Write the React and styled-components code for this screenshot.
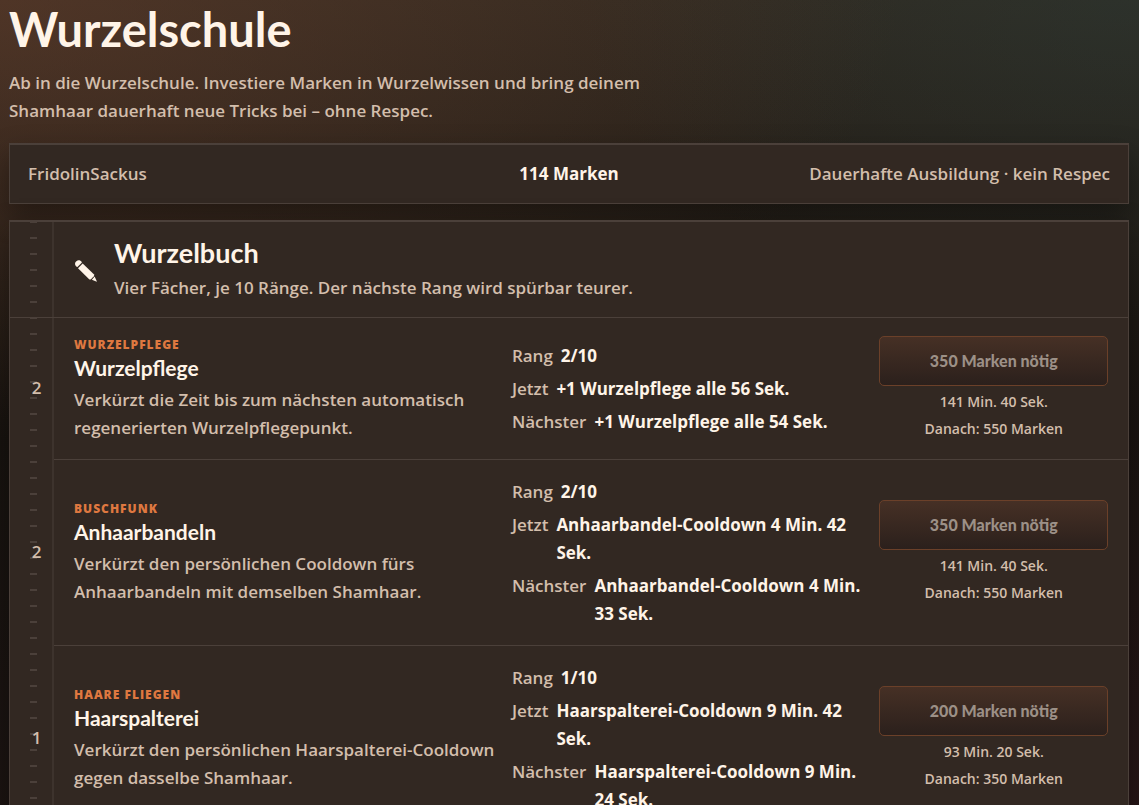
import React from "react";
import styled, { createGlobalStyle } from "styled-components";

const colors = {
  cream: "#fff4e8",
  sand: "#d3beac",
  accent: "#df7840",
  panel: "#322822",
  line: "#4b403a",
};

const GlobalStyle = createGlobalStyle`
  * { box-sizing: border-box; }
  html { background: #1c1412; scrollbar-width: none; }
  body {
    margin: 0;
    color: ${colors.sand};
    font: 600 17px/28px "Open Sans", "Noto Sans", sans-serif;
    background:
      radial-gradient(ellipse 900px 440px at 0 0, rgba(110, 65, 45, 0.5), transparent),
      radial-gradient(ellipse 560px 320px at 100% 0, rgba(40, 62, 60, 0.4), transparent),
      radial-gradient(ellipse 600px 480px at 100% 800px, rgba(62, 26, 32, 0.32), transparent),
      linear-gradient(180deg, #302920 0, #17130f 420px, #1c1412 100%);
  }
  h1, h2, h3, p, dl, dd { margin: 0; }
`;

const Page = styled.main`
  padding: 0 10px 24px 9px;
`;

const Intro = styled.header`
  padding: 0 0 18px;
  max-width: 660px;
`;

const Title = styled.h1`
  padding: 1px 0 12px;
  color: ${colors.cream};
  font: 700 47px/56px Lato, sans-serif;
`;

const StatusBar = styled.section`
  display: grid;
  grid-template-columns: 1fr auto 1fr;
  align-items: center;
  padding: 16px 18px 15px;
  border: 1px solid ${colors.line};
  background: ${colors.panel};
  box-shadow: inset 0 1px 0 ${colors.line}, 0 12px 28px rgba(0, 0, 0, 0.35);

  strong { color: ${colors.cream}; font-weight: 700; }
  span:last-child { text-align: right; }
`;

const Book = styled.section`
  margin-top: 16px;
  border: 1px solid ${colors.line};
  background:
    repeating-linear-gradient(180deg, ${colors.line} 0 2px, transparent 2px 16px) 20px 0 / 7px 100% no-repeat,
    linear-gradient(#3d332d, #3d332d) 42px 0 / 2px 100% no-repeat,
    ${colors.panel};
  box-shadow: inset 0 1px 0 ${colors.line}, 0 12px 28px rgba(0, 0, 0, 0.35);
`;

const BookHeader = styled.header`
  display: flex;
  align-items: center;
  gap: 16px;
  padding: 16px 20px 15px 64px;
  border-bottom: 1px solid ${colors.line};

  svg { flex: none; }
`;

const BookTitle = styled.h2`
  margin-bottom: 5px;
  color: ${colors.cream};
  font: 700 27px/32px Lato, sans-serif;
`;

const Subject = styled.article`
  display: grid;
  grid-template-columns: 44px 1fr;
`;

const RankMark = styled.div`
  display: grid;
  place-items: center;
  padding: 0 0 2px 9px;
`;

const SubjectBody = styled.div`
  display: grid;
  grid-template-columns: 1.2fr 1fr 0.65fr;
  column-gap: 16px;
  align-items: center;
  padding: 18px 20px 17px;
  border-bottom: 1px solid ${colors.line};
`;

const Eyebrow = styled.p`
  color: ${colors.accent};
  font-size: 12px;
  font-weight: 800;
  line-height: 18px;
  letter-spacing: 1px;
  text-transform: uppercase;
`;

const SubjectTitle = styled.h3`
  margin-bottom: 4px;
  color: ${colors.cream};
  font: 700 21px/28px Lato, sans-serif;
`;

const Facts = styled.dl`
  display: grid;
  gap: 5px;
`;

const Fact = styled.div`
  display: flex;
  gap: 8px;

  dd { color: ${colors.cream}; font-weight: 700; }
`;

const Purchase = styled.div`
  font-size: 14px;
  line-height: 27px;
  text-align: center;
`;

const BuyButton = styled.button`
  display: block;
  width: 100%;
  height: 50px;
  margin-bottom: 2px;
  border: 1px solid #6b4029;
  border-radius: 5px;
  background: linear-gradient(180deg, #463025, #2b201c);
  color: #9c9087;
  font: 900 16px/24px Lato, sans-serif;
`;

const subjects = [
  {
    rank: 2,
    area: "Wurzelpflege",
    title: "Wurzelpflege",
    text: "Verkürzt die Zeit bis zum nächsten automatisch regenerierten Wurzelpflegepunkt.",
    now: "+1 Wurzelpflege alle 56 Sek.",
    next: "+1 Wurzelpflege alle 54 Sek.",
    cost: 350,
    wait: "141 Min. 40 Sek.",
    after: 550,
  },
  {
    rank: 2,
    area: "Buschfunk",
    title: "Anhaarbandeln",
    text: "Verkürzt den persönlichen Cooldown fürs Anhaarbandeln mit demselben Shamhaar.",
    now: "Anhaarbandel-Cooldown 4 Min. 42 Sek.",
    next: "Anhaarbandel-Cooldown 4 Min. 33 Sek.",
    cost: 350,
    wait: "141 Min. 40 Sek.",
    after: 550,
  },
  {
    rank: 1,
    area: "Haare fliegen",
    title: "Haarspalterei",
    text: "Verkürzt den persönlichen Haarspalterei-Cooldown gegen dasselbe Shamhaar.",
    now: "Haarspalterei-Cooldown 9 Min. 42 Sek.",
    next: "Haarspalterei-Cooldown 9 Min. 24 Sek.",
    cost: 200,
    wait: "93 Min. 20 Sek.",
    after: 350,
  },
];

function PencilIcon() {
  return (
    <svg width="24" height="24" viewBox="0 0 24 24" fill={colors.cream} aria-hidden="true">
      <path d="M2.600 8.800C.4 6.800.8 4.400 2.400 3.200 4.200 1.800 6.400 2.200 7.900 4.200L7.500 5 3.400 9Z" />
      <path d="M8.700 5.500 19.800 16.200Q20.600 17.200 19.800 18.200L17.200 21Q16 22 14.900 21L4 10.200Z" />
      <path d="M20.600 18.600 22.800 23.200Q22.900 23.800 22.200 23.600L17.900 21.700Z" />
    </svg>
  );
}

export default function App() {
  return (
    <>
      <GlobalStyle />
      <Page>
        <Intro>
          <Title>Wurzelschule</Title>
          <p>
            Ab in die Wurzelschule. Investiere Marken in Wurzelwissen und bring deinem
            Shamhaar dauerhaft neue Tricks bei – ohne Respec.
          </p>
        </Intro>
        <StatusBar>
          <span>FridolinSackus</span>
          <strong>114 Marken</strong>
          <span>Dauerhafte Ausbildung · kein Respec</span>
        </StatusBar>
        <Book>
          <BookHeader>
            <PencilIcon />
            <div>
              <BookTitle>Wurzelbuch</BookTitle>
              <p>Vier Fächer, je 10 Ränge. Der nächste Rang wird spürbar teurer.</p>
            </div>
          </BookHeader>
          {subjects.map((s) => (
            <Subject key={s.title}>
              <RankMark>{s.rank}</RankMark>
              <SubjectBody>
                <div>
                  <Eyebrow>{s.area}</Eyebrow>
                  <SubjectTitle>{s.title}</SubjectTitle>
                  <p>{s.text}</p>
                </div>
                <Facts>
                  <Fact><dt>Rang</dt><dd>{s.rank}/10</dd></Fact>
                  <Fact><dt>Jetzt</dt><dd>{s.now}</dd></Fact>
                  <Fact><dt>Nächster</dt><dd>{s.next}</dd></Fact>
                </Facts>
                <Purchase>
                  <BuyButton type="button" disabled>{s.cost} Marken nötig</BuyButton>
                  <p>{s.wait}</p>
                  <p>Danach: {s.after} Marken</p>
                </Purchase>
              </SubjectBody>
            </Subject>
          ))}
        </Book>
      </Page>
    </>
  );
}
